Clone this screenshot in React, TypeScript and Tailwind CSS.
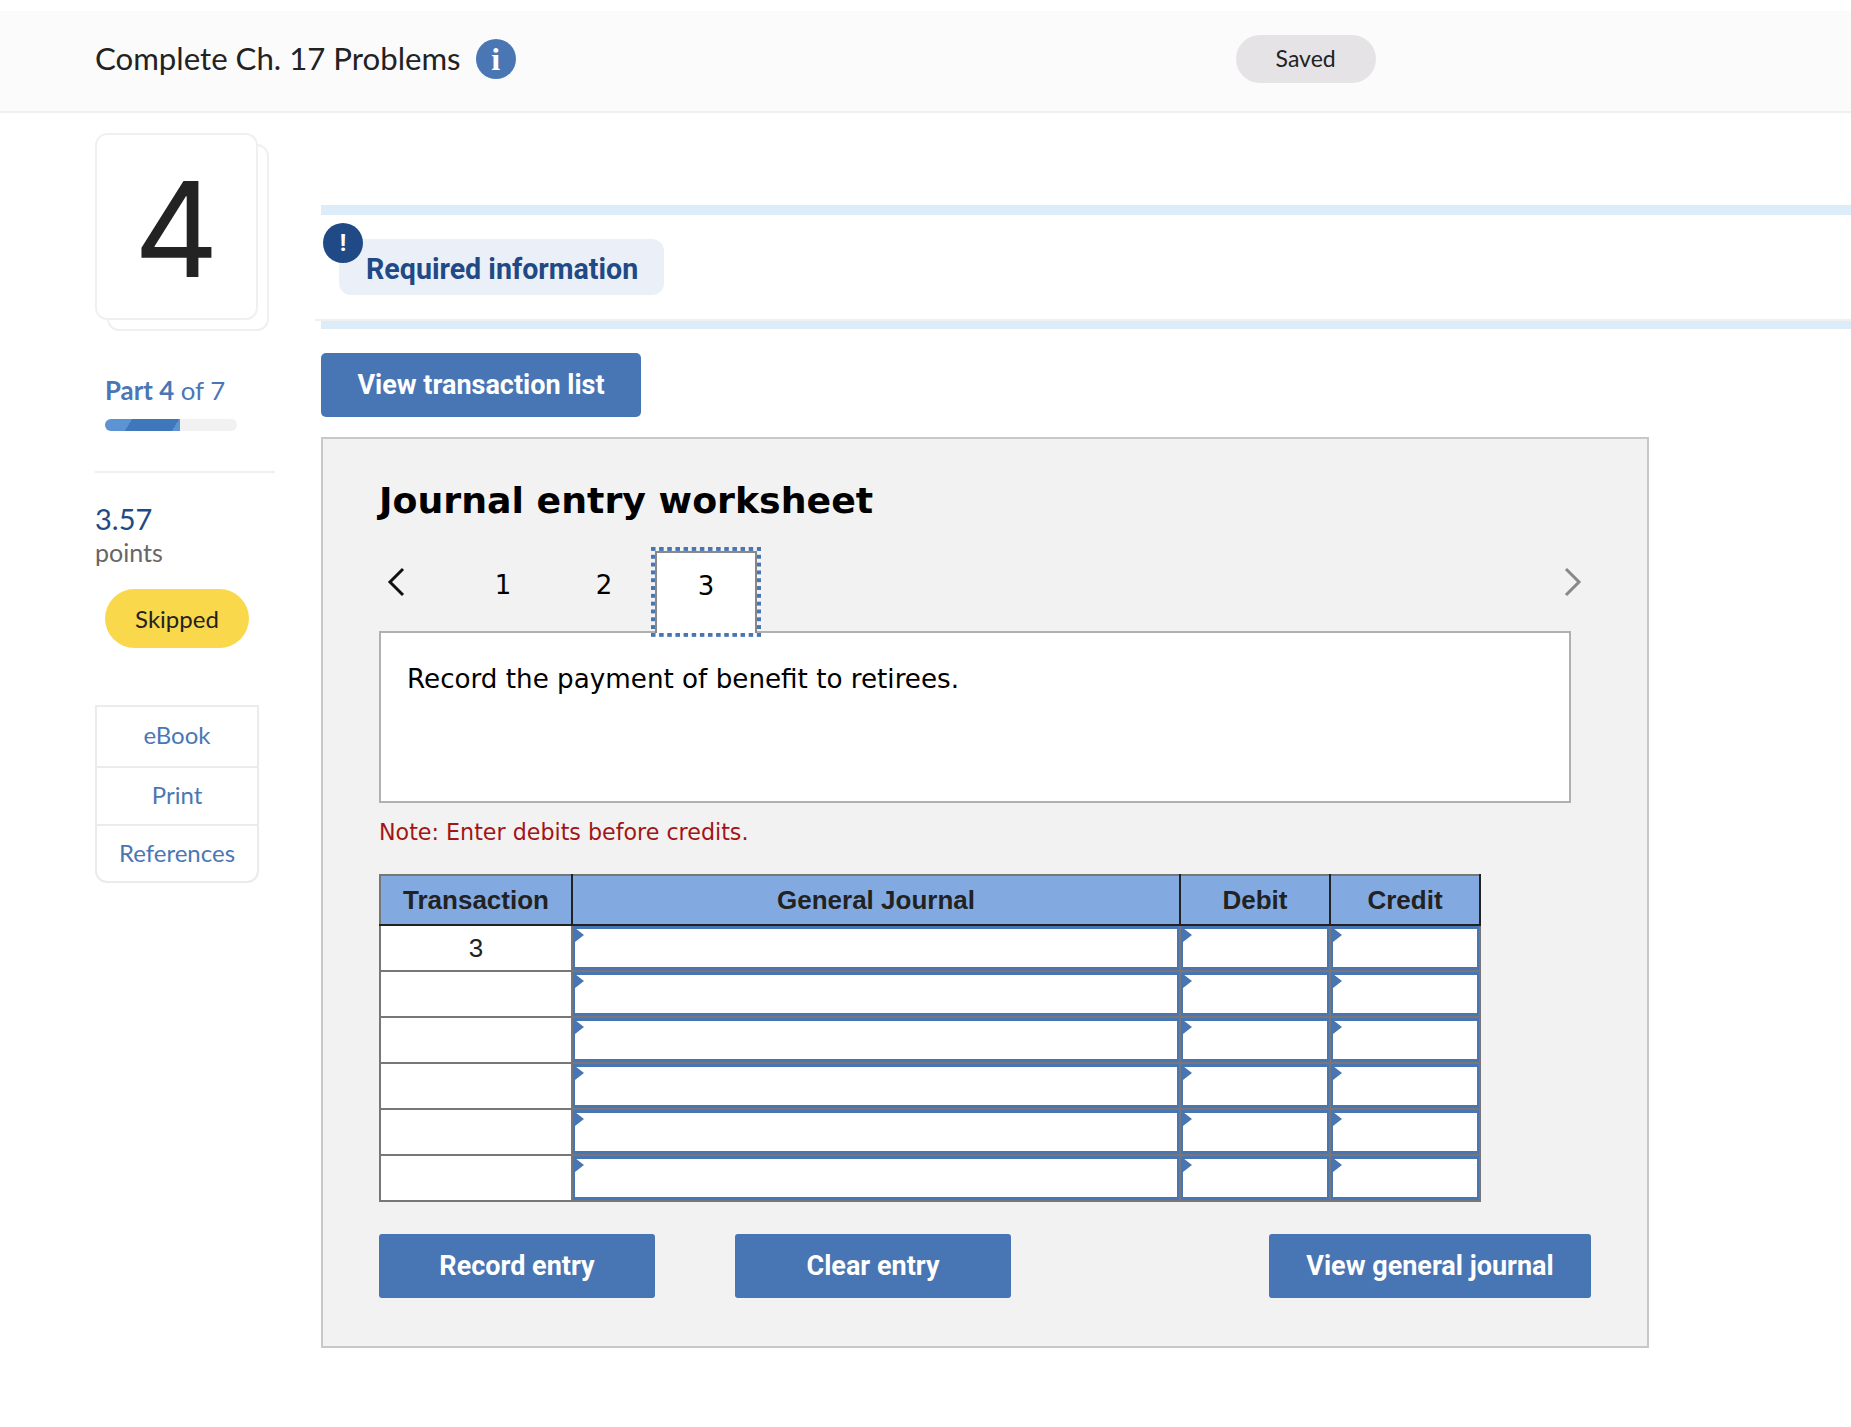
const proxima = "font-['Lato','Noto_Sans',sans-serif]";
const verdana = "font-['DejaVu_Sans',sans-serif]";
const roboto = "font-['Roboto',sans-serif] font-bold";
const arial = "font-['Liberation_Sans',Arial,sans-serif]";

const Marker = () => (
  <span className="absolute -top-px left-0 h-0 w-0 border-y-[7px] border-l-[9px] border-y-transparent border-l-[#4875b4]" />
);

const InputCell = () => (
  <td className="relative h-[46px] border-2 border-[#777777] bg-white p-0">
    <div className="relative h-[44px] border-x-2 border-y-[3px] border-[#4875b4] bg-white">
      <Marker />
    </div>
  </td>
);

const ActionButton = ({ label, className }: { label: string; className: string }) => (
  <button className={`h-16 rounded-[3px] bg-[#4875b4] text-[27px] text-white ${roboto} ${className}`}>{label}</button>
);

const Sidebar = () => (
  <aside className={`w-[321px] shrink-0 pl-[95px] pt-5 ${proxima}`}>
    <div className="relative h-[198px] w-[174px]">
      <div className="absolute bottom-0 right-0 h-[187px] w-[162px] rounded-xl border-2 border-[#f0f0f0] bg-white" />
      <div className="absolute left-0 top-0 flex h-[187px] w-[163px] items-center justify-center rounded-xl border-2 border-[#f0f0f0] bg-white pt-1 font-['Inter',sans-serif] text-[132px] leading-none text-[#232323]">
        4
      </div>
    </div>
    <div className="ml-2.5 mt-[41px] text-[25.8px] leading-[36px] text-[#4a77b4]">
      <b>Part 4</b> of 7
    </div>
    <div className="ml-2.5 mt-[11px] h-3 w-[132px] overflow-hidden rounded-full bg-[#f1f1f1]">
      <div className="h-full w-[75px] bg-[linear-gradient(122deg,#5b93d3_0,#5b93d3_33%,#3f78ba_33%,#3f78ba_90%,#5b93d3_90%)]" />
    </div>
    <div className="mt-10 h-0.5 w-[180px] bg-[#f0f0f0]" />
    <div className="mt-[28px] text-[29px] leading-[36px] text-[#1f4a85]">3.57</div>
    <div className="text-[25px] leading-[30px] text-[#666666]">points</div>
    <div className="ml-2.5 mt-[22px] flex h-[59px] w-[144px] items-center justify-center rounded-full bg-[#fad84c] text-[24px] text-[#222222]">
      Skipped
    </div>
    <div className="mt-[57px] flex w-[164px] flex-col rounded-b-xl border-2 border-[#ebebeb] text-[24px] text-[#4a77b4]">
      <a className="flex h-[61px] items-center justify-center border-b-2 border-[#ebebeb] pb-1">eBook</a>
      <a className="flex h-[58px] items-center justify-center border-b-2 border-[#ebebeb] pb-0.5">Print</a>
      <a className="flex h-[55px] items-center justify-center pb-0.5">References</a>
    </div>
  </aside>
);

const Worksheet = () => (
  <section className="mt-5 h-[911px] w-[1328px] border-2 border-[#c8c8c8] bg-[#f2f2f2] pl-[56px]">
    <h2 className={`pt-[38px] text-[36.3px] font-bold leading-[48px] text-black ${verdana}`}>Journal entry worksheet</h2>

    <div className={`relative z-10 -mb-1.5 mt-[22px] flex h-[90px] w-[1203px] items-start text-[26px] text-black ${verdana}`}>
      <svg className="ml-2 mt-5 h-[30px] w-[18px]" viewBox="0 0 18 30" fill="none" stroke="#111111" strokeWidth="3">
        <path d="M16 2 3 15l13 13" />
      </svg>
      <span className="ml-[88px] flex h-[76px] w-[20px] items-center justify-center">1</span>
      <span className="ml-[81px] flex h-[76px] w-[20px] items-center justify-center">2</span>
      <span className="ml-[37px] h-[90px] w-[110px] bg-[conic-gradient(from_270deg,#4875b4_25%,transparent_0)] bg-[length:8.15px_7.82px] p-1">
        <span className="flex h-[82px] items-center justify-center border-x-2 border-t-2 border-[#888888] bg-white pb-3.5">3</span>
      </span>
      <svg className="ml-auto mt-5 h-[30px] w-[18px]" viewBox="0 0 18 30" fill="none" stroke="#888888" strokeWidth="3">
        <path d="M2 2l13 13L2 28" />
      </svg>
    </div>

    <div className={`h-[172px] w-[1192px] border-2 border-[#b0b0b0] bg-white pl-[26px] pt-7 text-[26.2px] leading-[36px] text-black ${verdana}`}>
      Record the payment of benefit to retirees.
    </div>

    <p className={`mt-[14px] text-[22.2px] leading-[30px] text-[#a31515] ${verdana}`}>Note: Enter debits before credits.</p>

    <table className={`mt-[27px] w-[1100px] table-fixed border-collapse text-[26px] text-[#222222] ${arial}`}>
      <colgroup>
        <col className="w-[192px]" />
        <col className="w-[608px]" />
        <col className="w-[150px]" />
        <col className="w-[150px]" />
      </colgroup>
      <thead>
        <tr className="h-[50px] bg-[#82aae0] font-bold">
          <th className="border-2 border-[#777777] border-b-[#222222] border-r-[#222222]">Transaction</th>
          <th className="border-2 border-[#777777] border-b-[#222222] border-r-[#222222]">General Journal</th>
          <th className="border-2 border-[#777777] border-b-[#222222] border-r-[#222222]">Debit</th>
          <th className="border-2 border-[#777777] border-b-[#222222] border-r-[#222222]">Credit</th>
        </tr>
      </thead>
      <tbody>
        {[0, 1, 2, 3, 4, 5].map((i) => (
          <tr key={i} className="h-[46px]">
            <td className="border-2 border-[#777777] bg-white p-0 text-center">{i === 0 ? '3' : ''}</td>
            <InputCell />
            <InputCell />
            <InputCell />
          </tr>
        ))}
      </tbody>
    </table>

    <div className="mt-8 flex w-[1212px]">
      <ActionButton label="Record entry" className="w-[276px]" />
      <ActionButton label="Clear entry" className="ml-20 w-[276px]" />
      <ActionButton label="View general journal" className="ml-auto w-[322px]" />
    </div>
  </section>
);

export default function App() {
  return (
    <div className="min-h-[1427px] w-full overflow-hidden bg-white">
      <header className={`mt-[11px] flex h-[102px] items-center border-b-2 border-[#f0f0f0] bg-[#fbfbfb] pb-1 pl-[95px] ${proxima}`}>
        <h1 className="pb-0.5 text-[31.2px] text-[#222222]">Complete Ch. 17 Problems</h1>
        <span className="ml-[15px] flex h-10 w-10 items-center justify-center rounded-full bg-[#4a77b4] font-['Liberation_Serif',serif] text-[32px] font-bold text-white">
          i
        </span>
        <span className="ml-[720px] flex h-12 w-[140px] items-center justify-center rounded-full bg-[#e5e3e6] pb-0.5 text-[23px] text-[#222222]">
          Saved
        </span>
      </header>

      <div className="flex">
        <Sidebar />
        <main className="min-w-0 flex-1 pt-[92px]">
          <div className="h-2.5 bg-[#ddecf9]" />
          <div className="relative h-[104px]">
            <div className="absolute left-[2px] top-2 z-10 flex h-10 w-10 items-center justify-center rounded-full bg-[#1f4a85] font-['Roboto',sans-serif] text-[24px] font-bold text-white">
              !
            </div>
            <div className="ml-[18px] flex h-14 w-[325px] translate-y-6 items-center rounded-xl bg-[#ebf0f8] pl-[27px] pt-1 text-[28.6px] text-[#1f4a85]">
              <span className={roboto}>Required information</span>
            </div>
          </div>
          <div className="-ml-1.5 h-[2px] bg-[#f0f0f0]" />
          <div className="h-2 bg-[#ddecf9]" />
          <button className={`mt-6 h-16 w-[320px] rounded-[5px] bg-[#4875b4] text-[27px] text-white ${roboto}`}>View transaction list</button>
          <Worksheet />
        </main>
      </div>
    </div>
  );
}
